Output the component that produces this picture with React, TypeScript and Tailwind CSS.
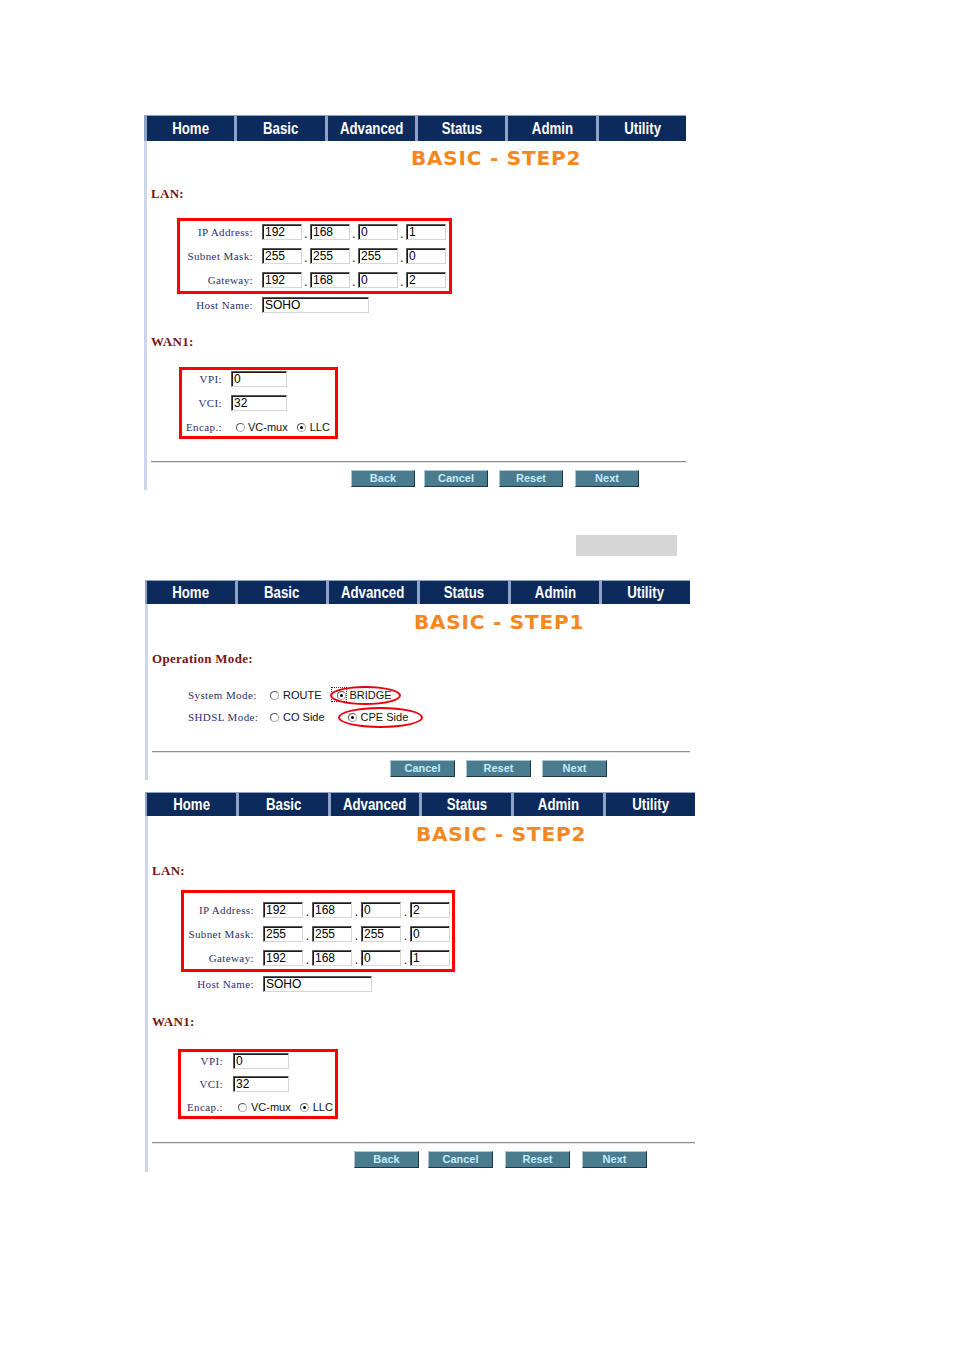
import React from "react";

const NAV = ["Home", "Basic", "Advanced", "Status", "Admin", "Utility"];

function Nav({ cls }: { cls: string }) {
  return (
    <div className={`flex gap-[3px] bg-[#8fa3c6] pt-[1px] ${cls}`}>
      {NAV.map((n) => (
        <div key={n} className="flex-1 bg-[#0c2a5c] flex items-center justify-center overflow-hidden">
          <span className="inline-block scale-x-[0.78] text-white text-[17px] font-bold leading-none whitespace-nowrap font-['Liberation_Sans',Arial,sans-serif]">
            {n}
          </span>
        </div>
      ))}
    </div>
  );
}

function Title({ cls, text }: { cls: string; text: string }) {
  return (
    <div className={`flex items-center ${cls}`}>
      <span className="text-[#f5871f] font-bold text-[20px] leading-none tracking-[0.8px] whitespace-nowrap font-['DejaVu_Sans',sans-serif]">
        {text}
      </span>
    </div>
  );
}

function Heading({ cls, children }: { cls: string; children: React.ReactNode }) {
  return (
    <div
      className={`h-[16px] leading-[16px] ml-[4px] text-[13px] font-bold tracking-[0.3px] whitespace-nowrap text-[#7a1315] font-['Liberation_Serif',serif] ${cls}`}
    >
      {children}
    </div>
  );
}

function Label({ cls, children }: { cls: string; children: React.ReactNode }) {
  return (
    <div
      className={`shrink-0 text-right text-[11px] leading-none tracking-[0.4px] whitespace-nowrap text-[#30306a] font-['Liberation_Serif',serif] ${cls}`}
    >
      {children}
    </div>
  );
}

function Field({ cls, value }: { cls: string; value: string }) {
  return (
    <div
      className={`shrink-0 h-[16px] border border-t-[#5a5a5a] border-l-[#5a5a5a] border-r-[#d6d6d6] border-b-[#d6d6d6] shadow-[inset_1px_1px_0_#1a1a1a] bg-white pl-[2px] text-[12px] leading-[15px] text-black whitespace-nowrap font-['Liberation_Sans',Arial,sans-serif] ${cls}`}
    >
      {value}
    </div>
  );
}

function Dot({ cls }: { cls: string }) {
  return (
    <div
      className={`shrink-0 h-[16px] flex items-end justify-center text-[12px] leading-[12px] text-black font-['Liberation_Sans',Arial,sans-serif] ${cls}`}
    >
      .
    </div>
  );
}

function Radio({ checked, cls }: { checked?: boolean; cls: string }) {
  return (
    <span
      className={`shrink-0 inline-flex w-[9px] h-[9px] rounded-full border border-t-[#555] border-l-[#555] border-r-[#aaa] border-b-[#aaa] bg-white items-center justify-center ${cls}`}
    >
      {checked && <span className="w-[3px] h-[3px] rounded-full bg-black" />}
    </span>
  );
}

function RText({ cls, children }: { cls: string; children: React.ReactNode }) {
  return (
    <span
      className={`shrink-0 whitespace-nowrap text-[11px] leading-none text-[#111] font-['Liberation_Sans',Arial,sans-serif] ${cls}`}
    >
      {children}
    </span>
  );
}

function Btn({ label, cls }: { label: string; cls: string }) {
  return (
    <div
      className={`shrink-0 h-[17px] flex items-center justify-center bg-[#4b7b8f] border border-t-[#a9c6d2] border-l-[#a9c6d2] border-r-[#1c3744] border-b-[#1c3744] text-[11px] font-bold text-[#c2ecf9] font-['Liberation_Sans',Arial,sans-serif] ${cls}`}
    >
      {label}
    </div>
  );
}

function Sep({ cls }: { cls: string }) {
  return <div className={`ml-[4px] h-[2px] border-t border-t-[#8e8e8e] border-b border-b-[#e4e4e4] ${cls}`} />;
}

function IpRow({
  label,
  vals,
  labelW,
  gapCls,
  dotW,
}: {
  label: string;
  vals: string[];
  labelW: string;
  gapCls: string;
  dotW: string;
}) {
  return (
    <div className="h-[22px] flex items-center">
      <Label cls={labelW}>{label}</Label>
      <div className={`flex items-center ${gapCls}`}>
        <Field cls="w-[40px]" value={vals[0]} />
        <Dot cls={dotW} />
        <Field cls="w-[40px]" value={vals[1]} />
        <Dot cls={dotW} />
        <Field cls="w-[40px]" value={vals[2]} />
        <Dot cls={dotW} />
        <Field cls="w-[40px]" value={vals[3]} />
      </div>
    </div>
  );
}

function Panel1() {
  return (
    <div className="ml-[144px] w-[542px]">
      <Nav cls="h-[26px] pl-[3px]" />
      <div className="h-[349px] border-l-[3px] border-[#cdd6e8] flex flex-col">
        <Title cls="h-[34px] pl-[264px]" text="BASIC - STEP2" />
        <Heading cls="mt-[11px]">LAN:</Heading>
        <div className="mt-[16px] ml-[30px] w-[275px] border-[3px] border-[#ff0000] flex flex-col gap-[2px]">
          <IpRow label="IP Address:" vals={["192", "168", "0", "1"]} labelW="w-[73px]" gapCls="ml-[9px]" dotW="w-[8px]" />
          <IpRow label="Subnet Mask:" vals={["255", "255", "255", "0"]} labelW="w-[73px]" gapCls="ml-[9px]" dotW="w-[8px]" />
          <IpRow label="Gateway:" vals={["192", "168", "0", "2"]} labelW="w-[73px]" gapCls="ml-[9px]" dotW="w-[8px]" />
        </div>
        <div className="ml-[33px] h-[22px] flex items-center">
          <Label cls="w-[73px]">Host Name:</Label>
          <Field cls="ml-[9px] w-[107px]" value="SOHO" />
        </div>
        <Heading cls="mt-[18px]">WAN1:</Heading>
        <div className="mt-[17px] ml-[32px] w-[159px] border-[3px] border-[#ff0000] flex flex-col gap-[6px]">
          <div className="h-[18px] flex items-center">
            <Label cls="w-[40px]">VPI:</Label>
            <Field cls="ml-[9px] w-[56px]" value="0" />
          </div>
          <div className="h-[18px] flex items-center">
            <Label cls="w-[40px]">VCI:</Label>
            <Field cls="ml-[9px] w-[56px]" value="32" />
          </div>
          <div className="h-[18px] flex items-center">
            <Label cls="w-[40px]">Encap.:</Label>
            <Radio cls="ml-[14px]" />
            <RText cls="ml-[3px]">VC-mux</RText>
            <Radio cls="ml-[9px]" checked />
            <RText cls="ml-[4px]">LLC</RText>
          </div>
        </div>
        <Sep cls="mt-[22px]" />
        <div className="mt-[7px] ml-[204px] flex">
          <Btn label="Back" cls="w-[64px]" />
          <Btn label="Cancel" cls="ml-[9px] w-[64px]" />
          <Btn label="Reset" cls="ml-[11px] w-[64px]" />
          <Btn label="Next" cls="ml-[12px] w-[64px]" />
        </div>
      </div>
    </div>
  );
}

function Panel2() {
  return (
    <div className="mt-[24px] ml-[145px] w-[545px]">
      <Nav cls="h-[24px] pl-[2px]" />
      <div className="h-[176px] border-l-[3px] border-[#cdd6e8] flex flex-col">
        <Title cls="h-[36px] pl-[266px]" text="BASIC - STEP1" />
        <Heading cls="mt-[11px]">Operation Mode:</Heading>
        <div className="mt-[18px] ml-[40px] h-[20px] relative flex items-center">
          <Label cls="w-[68px]">System Mode:</Label>
          <Radio cls="ml-[14px]" />
          <RText cls="ml-[4px]">ROUTE</RText>
          <Radio cls="ml-[15px]" checked />
          <RText cls="ml-[4px]">BRIDGE</RText>
          <div className="absolute left-[143px] top-[2px] w-[16px] h-[15px] border border-dotted border-[#333]" />
          <div className="absolute left-[142px] top-[1px] w-[71px] h-[19px] rounded-[50%] border-2 border-[#e8000b]" />
        </div>
        <div className="mt-[2px] ml-[40px] h-[20px] relative flex items-center">
          <Label cls="w-[68px]">SHDSL Mode:</Label>
          <Radio cls="ml-[14px]" />
          <RText cls="ml-[4px]">CO Side</RText>
          <Radio cls="ml-[23px]" checked />
          <RText cls="ml-[4px]">CPE Side</RText>
          <div className="absolute left-[150px] top-[0px] w-[85px] h-[21px] rounded-[50%] border-2 border-[#e8000b]" />
        </div>
        <Sep cls="mt-[24px]" />
        <div className="mt-[7px] ml-[242px] flex">
          <Btn label="Cancel" cls="w-[65px]" />
          <Btn label="Reset" cls="ml-[11px] w-[65px]" />
          <Btn label="Next" cls="ml-[11px] w-[65px]" />
        </div>
      </div>
    </div>
  );
}

function Panel3() {
  return (
    <div className="mt-[12px] ml-[145px] w-[550px]">
      <Nav cls="h-[24px] pl-[2px]" />
      <div className="h-[356px] border-l-[3px] border-[#cdd6e8] flex flex-col">
        <Title cls="h-[36px] pl-[268px]" text="BASIC - STEP2" />
        <Heading cls="mt-[11px]">LAN:</Heading>
        <div className="mt-[11px] ml-[33px] w-[274px] border-[3px] border-[#ff0000] pt-[6px] flex flex-col gap-[2px]">
          <IpRow label="IP Address:" vals={["192", "168", "0", "2"]} labelW="w-[70px]" gapCls="ml-[9px]" dotW="w-[9px]" />
          <IpRow label="Subnet Mask:" vals={["255", "255", "255", "0"]} labelW="w-[70px]" gapCls="ml-[9px]" dotW="w-[9px]" />
          <IpRow label="Gateway:" vals={["192", "168", "0", "1"]} labelW="w-[70px]" gapCls="ml-[9px]" dotW="w-[9px]" />
        </div>
        <div className="mt-[1px] ml-[36px] h-[22px] flex items-center">
          <Label cls="w-[70px]">Host Name:</Label>
          <Field cls="ml-[9px] w-[109px]" value="SOHO" />
        </div>
        <Heading cls="mt-[19px]">WAN1:</Heading>
        <div className="mt-[19px] ml-[30px] w-[160px] border-[3px] border-[#ff0000] flex flex-col gap-[5px]">
          <div className="h-[18px] flex items-center">
            <Label cls="w-[42px]">VPI:</Label>
            <Field cls="ml-[10px] w-[56px]" value="0" />
          </div>
          <div className="h-[18px] flex items-center">
            <Label cls="w-[42px]">VCI:</Label>
            <Field cls="ml-[10px] w-[56px]" value="32" />
          </div>
          <div className="h-[18px] flex items-center">
            <Label cls="w-[42px]">Encap.:</Label>
            <Radio cls="ml-[15px]" />
            <RText cls="ml-[4px]">VC-mux</RText>
            <Radio cls="ml-[9px]" checked />
            <RText cls="ml-[4px]">LLC</RText>
          </div>
        </div>
        <Sep cls="mt-[23px]" />
        <div className="mt-[7px] ml-[206px] flex">
          <Btn label="Back" cls="w-[65px]" />
          <Btn label="Cancel" cls="ml-[9px] w-[65px]" />
          <Btn label="Reset" cls="ml-[12px] w-[65px]" />
          <Btn label="Next" cls="ml-[12px] w-[65px]" />
        </div>
      </div>
    </div>
  );
}

export default function App() {
  return (
    <div className="w-[954px] h-[1350px] bg-white pt-[115px] overflow-hidden">
      <Panel1 />
      <div className="mt-[45px] ml-[576px] w-[101px] h-[21px] bg-[#d6d6d6]" />
      <Panel2 />
      <Panel3 />
    </div>
  );
}
